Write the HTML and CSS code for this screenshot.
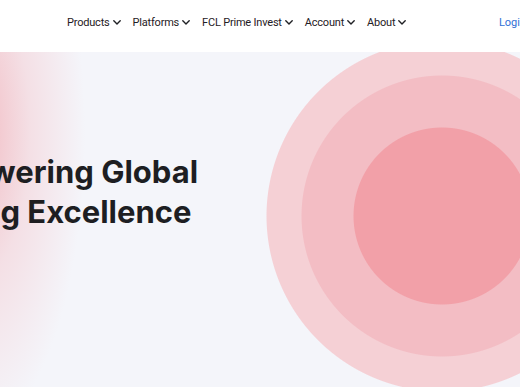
FILE: index.html
```html
<!DOCTYPE html>
<html lang="en">
  <head>
    <meta charset="UTF-8" />
    <meta name="viewport" content="width=device-width, initial-scale=1.0" />
    <title>FCL Markets</title>
    <link rel="stylesheet" href="styles.css">
  </head>
  <body>
    <header class="site-header">
      <nav class="main-nav">
        <a class="nav-item" href="#">Products <svg class="chev" viewBox="0 0 8 5"><path d="M0.8 0.8L4 4L7.2 0.8" /></svg></a>
        <a class="nav-item" href="#">Platforms <svg class="chev" viewBox="0 0 8 5"><path d="M0.8 0.8L4 4L7.2 0.8" /></svg></a>
        <a class="nav-item" href="#">FCL Prime Invest <svg class="chev" viewBox="0 0 8 5"><path d="M0.8 0.8L4 4L7.2 0.8" /></svg></a>
        <a class="nav-item" href="#">Account <svg class="chev" viewBox="0 0 8 5"><path d="M0.8 0.8L4 4L7.2 0.8" /></svg></a>
        <a class="nav-item" href="#">About <svg class="chev" viewBox="0 0 8 5"><path d="M0.8 0.8L4 4L7.2 0.8" /></svg></a>
      </nav>
      <a class="login" href="#">Login</a>
    </header>
    <section class="hero">
      <h1 class="hero-title">Empowering Global<br />Trading Excellence</h1>
    </section>
  </body>
</html>
```

FILE: styles.css
```css
body {
  margin: 0;
  font-family: Inter, "Noto Sans", sans-serif;
  background: #fff;
  overflow: hidden;
}
a {
  text-decoration: none;
}
.site-header {
  height: 52px;
  box-sizing: border-box;
  padding: 0 0 8px 67px;
  display: flex;
  align-items: center;
  background: #fff;
}
.main-nav {
  display: flex;
  gap: 12px;
}
.nav-item {
  color: #1f2024;
  font-family: Roboto, sans-serif;
  font-size: 11px;
  letter-spacing: -0.2px;
  display: flex;
  align-items: center;
  gap: 3px;
  white-space: nowrap;
}
.chev {
  width: 8px;
  height: 5px;
  fill: none;
  stroke: #1f2024;
  stroke-width: 1.4;
  stroke-linecap: round;
  stroke-linejoin: round;
}
.login {
  margin-left: auto;
  margin-right: -6px;
  color: #2f6fd6;
  font-family: Roboto, sans-serif;
  font-size: 11px;
}
.hero {
  height: 335px;
  padding-top: 100px;
  box-sizing: border-box;
  background:
    radial-gradient(circle at 442px 164px, #f2a0a8 88px, transparent 89px),
    radial-gradient(circle at 442px 164px, #f3bdc4 140px, transparent 141px),
    radial-gradient(circle at 442px 164px, #f5d0d5 175px, transparent 176px),
    radial-gradient(ellipse 110px 300px at -25px 80px, #f2bac1, rgba(244, 206, 212, 0.55) 50%, transparent),
    #f4f5fa;
}
.hero-title {
  margin: 0 0 0 -96px;
  font-size: 31px;
  line-height: 40px;
  font-weight: 700;
  color: #1d1e22;
}
```
